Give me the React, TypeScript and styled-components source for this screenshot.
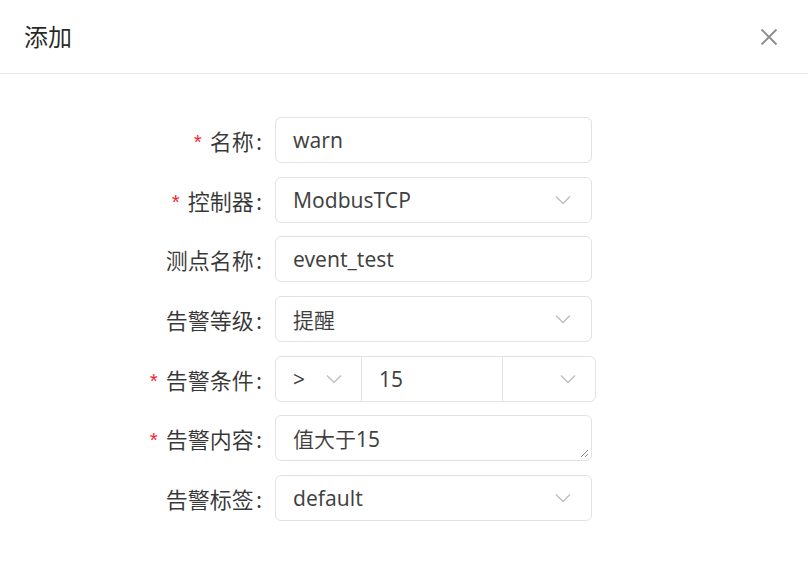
import React from "react";
import styled, { createGlobalStyle } from "styled-components";

const GlobalStyle = createGlobalStyle`
  html, body {
    margin: 0;
    padding: 0;
    background: #ffffff;
  }
  body {
    font-family: "Noto Sans", "Noto Sans CJK SC", sans-serif;
    color: rgba(0, 0, 0, 0.85);
  }
`;

const Modal = styled.div`
  width: 808px;
  height: 562px;
  background: #fff;
`;

const Header = styled.div`
  height: 74px;
  border-bottom: 1px solid #e8e8e8;
  display: flex;
  align-items: center;
  justify-content: space-between;
  padding: 0 30px 0 24px;
  box-sizing: border-box;
`;

const Title = styled.div`
  font-size: 24px;
  font-family: "Noto Sans CJK SC", sans-serif;
  color: rgba(0, 0, 0, 0.85);
  line-height: 1;
  margin-top: -2px;
`;

const CloseButton = styled.button`
  border: none;
  background: none;
  padding: 0;
  width: 18px;
  height: 18px;
  cursor: pointer;
  display: flex;
`;

const Body = styled.form`
  padding-top: 43px;
  display: flex;
  flex-direction: column;
  gap: 13.7px;
`;

const Row = styled.div`
  display: flex;
  align-items: center;
  height: 46px;
`;

const Label = styled.label`
  width: 262px;
  text-align: right;
  padding-right: 13px;
  flex-shrink: 0;
  font-size: 22px;
  font-family: "Noto Sans CJK SC", sans-serif;
  color: rgba(0, 0, 0, 0.78);
  white-space: nowrap;
`;

const Colon = styled.span`
  margin-left: 2px;
`;

const Star = styled.span`
  color: #f5222d;
  font-family: SimSun, "Liberation Mono", monospace;
  font-size: 20px;
  margin-right: 6px;
`;

const Box = styled.div<{ $width?: number }>`
  width: ${(p) => p.$width ?? 317}px;
  height: 46px;
  box-sizing: border-box;
  border: 1px solid #e2e2e2;
  border-radius: 6px;
  display: flex;
  align-items: center;
  padding: 0 20px 0 17px;
  font-size: 21px;
  color: rgba(0, 0, 0, 0.75);
  position: relative;
`;

const Value = styled.span`
  flex: 1;
  white-space: nowrap;
  font-family: "Noto Sans", "Noto Sans CJK SC", sans-serif;
`;

const Group = styled.div`
  width: 321px;
  height: 46px;
  box-sizing: border-box;
  border: 1px solid #e2e2e2;
  border-radius: 6px;
  display: flex;
  font-size: 21px;
  color: rgba(0, 0, 0, 0.75);
`;

const Cell = styled.div<{ $width: number; $last?: boolean }>`
  width: ${(p) => p.$width}px;
  box-sizing: border-box;
  display: flex;
  align-items: center;
  padding: 0 19px 0 17px;
  border-right: ${(p) => (p.$last ? "none" : "1px solid #e2e2e2")};
`;

const Resize = styled.svg`
  position: absolute;
  right: 2px;
  bottom: 2px;
`;

const Chevron = () => (
  <svg width="16" height="10" viewBox="0 0 16 10" fill="none">
    <path d="M1 1.5 L8 8.5 L15 1.5" stroke="#bfbfbf" strokeWidth="1.4" />
  </svg>
);

const FieldLabel: React.FC<{ text: string; required?: boolean }> = ({ text, required }) => (
  <Label>
    {required && <Star>*</Star>}
    {text}
    <Colon>:</Colon>
  </Label>
);

const App: React.FC = () => {
  return (
    <Modal>
      <GlobalStyle />
      <Header>
        <Title>添加</Title>
        <CloseButton type="button">
          <svg width="18" height="18" viewBox="0 0 18 18">
            <path d="M1.5 1.5 L16.5 16.5 M16.5 1.5 L1.5 16.5" stroke="#8c8c8c" strokeWidth="1.8" />
          </svg>
        </CloseButton>
      </Header>
      <Body>
        <Row>
          <FieldLabel text="名称" required />
          <Box><Value>warn</Value></Box>
        </Row>
        <Row>
          <FieldLabel text="控制器" required />
          <Box><Value>ModbusTCP</Value><Chevron /></Box>
        </Row>
        <Row>
          <FieldLabel text="测点名称" />
          <Box><Value>event_test</Value></Box>
        </Row>
        <Row>
          <FieldLabel text="告警等级" />
          <Box><Value>提醒</Value><Chevron /></Box>
        </Row>
        <Row>
          <FieldLabel text="告警条件" required />
          <Group>
            <Cell $width={86}><Value>&gt;</Value><Chevron /></Cell>
            <Cell $width={141}><Value>15</Value></Cell>
            <Cell $width={92} $last><Value /><Chevron /></Cell>
          </Group>
        </Row>
        <Row>
          <FieldLabel text="告警内容" required />
          <Box>
            <Value>值大于15</Value>
            <Resize width="10" height="10" viewBox="0 0 10 10">
              <path d="M9 2 L2 9 M9 6 L6 9" stroke="#8c8c8c" strokeWidth="1" />
            </Resize>
          </Box>
        </Row>
        <Row>
          <FieldLabel text="告警标签" />
          <Box><Value>default</Value><Chevron /></Box>
        </Row>
      </Body>
    </Modal>
  );
};

export default App;
